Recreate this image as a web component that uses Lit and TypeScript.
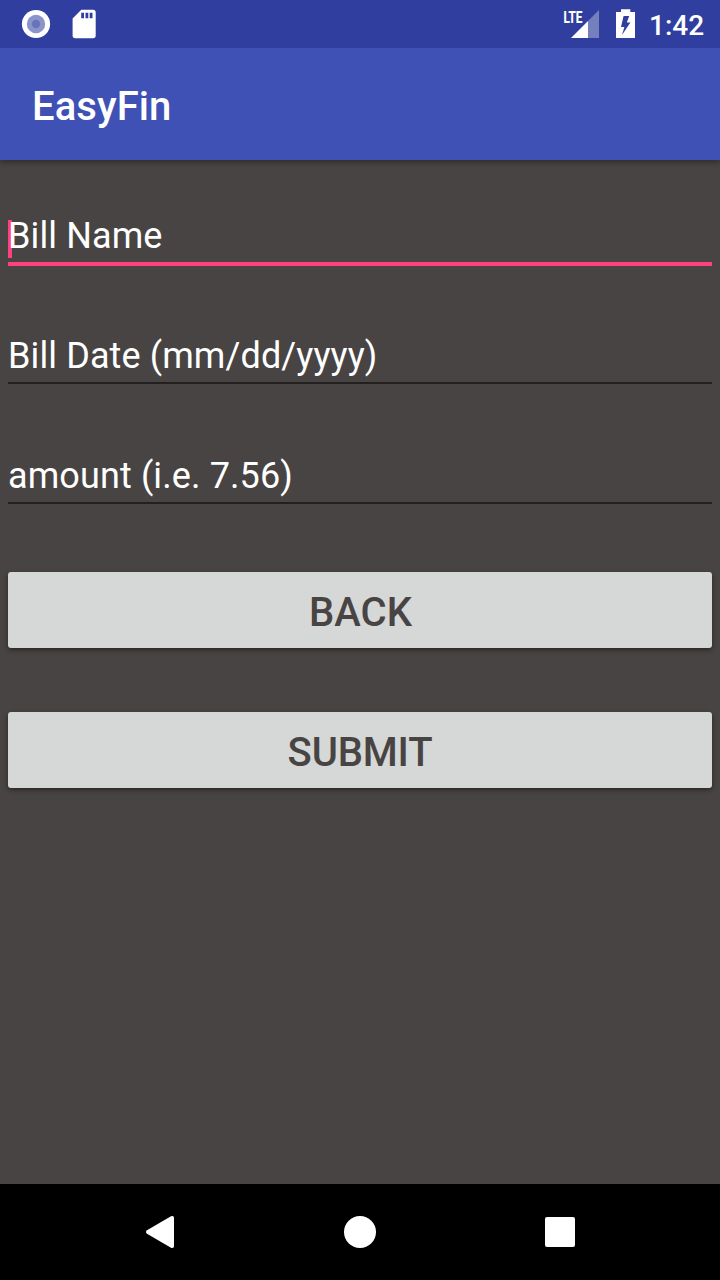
import { LitElement, html, css } from "lit";
import { customElement, property } from "lit/decorators.js";

@customElement("status-bar")
class StatusBar extends LitElement {
  static styles = css`
    :host {
      display: flex;
      justify-content: space-between;
      height: 48px;
      background: #303f9f;
      color: #fff;
    }
    svg {
      display: block;
    }
    .right {
      display: flex;
    }
    .clock {
      font-size: 28px;
      font-weight: 500;
      line-height: 52px;
      height: 48px;
      width: 71px;
    }
    .lte {
      font: 700 17px Roboto, sans-serif;
    }
  `;
  render() {
    return html`
      <svg width="120" height="48" viewBox="0 0 120 48" fill="#fff">
        <circle cx="36" cy="24" r="14.1" />
        <circle cx="36" cy="24" r="9.2" fill="#8b94cb" />
        <circle cx="36" cy="24" r="4.2" fill="#6874b9" />
        <path
          fill-rule="evenodd"
          d="M81.3 9.8H93Q95.7 9.8 95.7 12.5V35.5Q95.7 38.2 93 38.2H75.3Q72.6 38.2 72.6 35.5V18.5ZM81.2 12.8V18.3H84V12.8ZM85.5 12.8V18.3H88.3V12.8ZM89.7 12.8V18.3H92.5V12.8Z"
        />
      </svg>
      <div class="right">
        <svg width="99" height="48" viewBox="550 0 99 48" fill="#fff">
          <text class="lte" x="563.5" y="22.8" textLength="18.8" lengthAdjust="spacingAndGlyphs" stroke="#fff" stroke-width="0.2">LTE</text>
          <path d="M571 38L588 21V38Z" />
          <path d="M588 21L599 10V38H588Z" fill="#757fbe" />
          <path
            fill-rule="evenodd"
            d="M616 12H621V9.3H630.3V12H635V38H616ZM623.6 16L621 27H624.4L622 35L630.4 22.6H626.8L629.2 16Z"
          />
        </svg>
        <div class="clock">1:42</div>
      </div>
    `;
  }
}

@customElement("bill-field")
class BillField extends LitElement {
  @property() label = "";
  @property({ type: Boolean, reflect: true }) active = false;
  static styles = css`
    :host {
      display: block;
      box-sizing: border-box;
      position: relative;
      height: 44px;
      margin: 0 8px 76px;
      border-bottom: 2px solid #222120;
      color: #fff;
      font-size: 36px;
      letter-spacing: 0.11px;
      line-height: 32px;
    }
    :host([active]) {
      height: 46px;
      margin-bottom: 74px;
      border-bottom: 4px solid #ff4081;
    }
    .caret {
      position: absolute;
      left: 0;
      top: 0;
      width: 4px;
      height: 38px;
      background: #ff4081;
    }
    .label {
      position: relative;
      white-space: nowrap;
    }
  `;
  render() {
    return html`${this.active ? html`<div class="caret"></div>` : null}
      <div class="label">${this.label}</div>`;
  }
}

@customElement("nav-bar")
class NavBar extends LitElement {
  static styles = css`
    :host {
      display: block;
      height: 96px;
      background: #000;
    }
    svg {
      display: block;
    }
  `;
  render() {
    return html`
      <svg width="720" height="96" viewBox="0 0 720 96" fill="#fff">
        <path d="M147 46.2L171 32.3Q174 31 174 34V62Q174 65 171 63.7L147 49.8Q145 48 147 46.2Z" />
        <circle cx="360" cy="48" r="16" />
        <rect x="545" y="33" width="30" height="30" rx="2" />
      </svg>
    `;
  }
}

@customElement("app-root")
class AppRoot extends LitElement {
  static styles = css`
    :host {
      display: flex;
      flex-direction: column;
      height: 1280px;
      width: 720px;
      overflow: hidden;
      background: #484443;
      font-family: Roboto, sans-serif;
    }
    .toolbar {
      height: 112px;
      box-sizing: border-box;
      padding-left: 32px;
      background: #3f51b5;
      color: #fff;
      font-size: 40px;
      font-weight: 500;
      letter-spacing: 0.08px;
      line-height: 118px;
      box-shadow: 0 2px 6px rgba(0, 0, 0, 0.4);
      clip-path: inset(0 0 -12px 0);
    }
    .form {
      flex: 1;
      display: flex;
      flex-direction: column;
      padding-top: 60px;
    }
    .button {
      display: block;
      height: 76px;
      margin: 0 8px 64px;
      padding: 0;
      border: 0;
      border-radius: 3px;
      background: #d6d8d7;
      color: #484443;
      font: 500 40px/82px Roboto, sans-serif;
      text-align: center;
      box-shadow: 0 2px 5px rgba(0, 0, 0, 0.45);
    }
    .first {
      margin-top: -8px;
      text-indent: 1px;
    }
    .submit {
      letter-spacing: -0.15px;
    }
  `;
  render() {
    return html`
      <status-bar></status-bar>
      <div class="toolbar">EasyFin</div>
      <div class="form">
        <bill-field active label="Bill Name"></bill-field>
        <bill-field label="Bill Date (mm/dd/yyyy)"></bill-field>
        <bill-field label="amount (i.e. 7.56)"></bill-field>
        <div class="button first" role="button">BACK</div>
        <div class="button submit" role="button">SUBMIT</div>
      </div>
      <nav-bar></nav-bar>
    `;
  }
}
